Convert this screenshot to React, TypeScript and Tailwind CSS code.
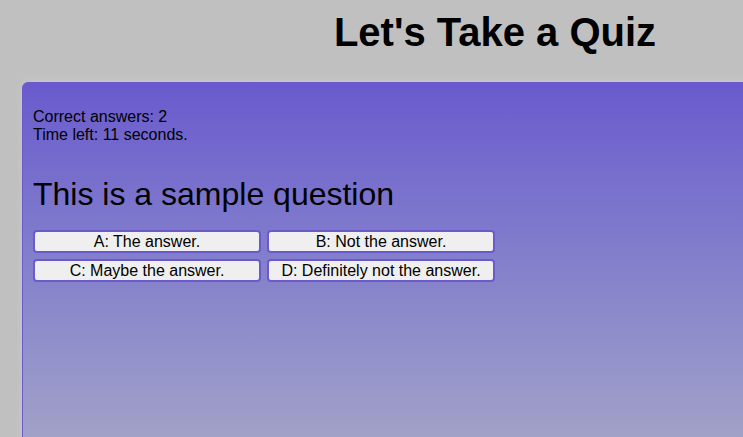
const answers = [
  "A: The answer.",
  "B: Not the answer.",
  "C: Maybe the answer.",
  "D: Definitely not the answer.",
];

export default function App() {
  return (
    <div className="h-screen w-screen overflow-hidden bg-[#c0c0c0]">
      <div
        className="w-[990px] pt-[9px] text-black"
        style={{ fontFamily: '"Liberation Sans", Arial, sans-serif' }}
      >
        <h1 className="text-center text-[40px] font-bold leading-[46px]">
          Let's Take a Quiz
        </h1>

        <div className="mx-[22px] mt-[27px] min-h-[526px] rounded-t-[6px] border border-[#6a5acd] bg-gradient-to-b from-[#6a5acd] to-[#c0c0c0] px-[10px] pt-[25px] shadow-[0_-2px_8px_rgba(255,255,255,0.15)]">
          <p className="text-[16px] leading-[18px]">Correct answers: 2</p>
          <p className="text-[16px] leading-[18px]">Time left: 11 seconds.</p>

          <h2 className="mt-[32px] text-[32px] leading-[37px]">
            This is a sample question
          </h2>

          <div className="mt-[17px] grid w-[462px] grid-cols-2 gap-x-[6px] gap-y-[6px]">
            {answers.map((a) => (
              <button
                key={a}
                className="h-[23px] rounded-[4px] border-2 border-[#6a5acd] bg-[#efefef] text-[16px] leading-[18px] text-black"
              >
                {a}
              </button>
            ))}
          </div>
        </div>
      </div>
    </div>
  );
}
